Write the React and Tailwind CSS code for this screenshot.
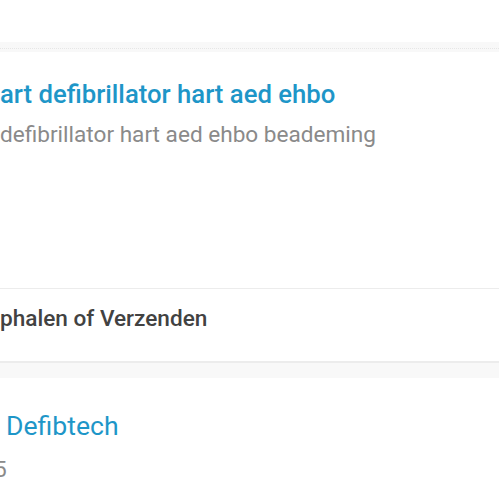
export default function App() {
  return (
    <div className="w-[499px] h-[499px] overflow-hidden bg-white" style={{ fontFamily: "Roboto, 'Noto Sans', sans-serif" }}>
      <div className="h-[42px] bg-white" />
      <div className="h-[10px] bg-[#f8f8f8] flex flex-col">
        <div className="h-[6px]" />
        <div className="border-t border-dotted border-[#e6e6e6]" />
      </div>
      <div className="bg-white">
        <div className="pt-[27px] h-[236px]">
          <div className="text-[25.7px] leading-[30px] font-medium text-[#1e96c8] whitespace-nowrap">art defibrillator hart aed ehbo</div>
          <div className="mt-[12px] text-[22.6px] leading-[28px] text-[#8a8a8a] whitespace-nowrap">defibrillator hart aed ehbo beademing</div>
        </div>
        <div className="border-t border-[#ececec] h-[73px] pt-[17px]">
          <div className="text-[22.6px] leading-[26px] font-medium text-[#424242] whitespace-nowrap">phalen of Verzenden</div>
        </div>
      </div>
      <div className="border-t-2 border-[#ececec] h-[17px] bg-[#f8f8f8]" />
      <div className="bg-white pt-[32px]">
        <div className="pl-[6px] text-[26.6px] leading-[32px] text-[#1e96c8] whitespace-nowrap">Defibtech</div>
        <div className="mt-[14px] -ml-[6px] text-[22.6px] leading-[28px] text-[#8a8a8a] whitespace-nowrap">5</div>
      </div>
    </div>
  );
}
